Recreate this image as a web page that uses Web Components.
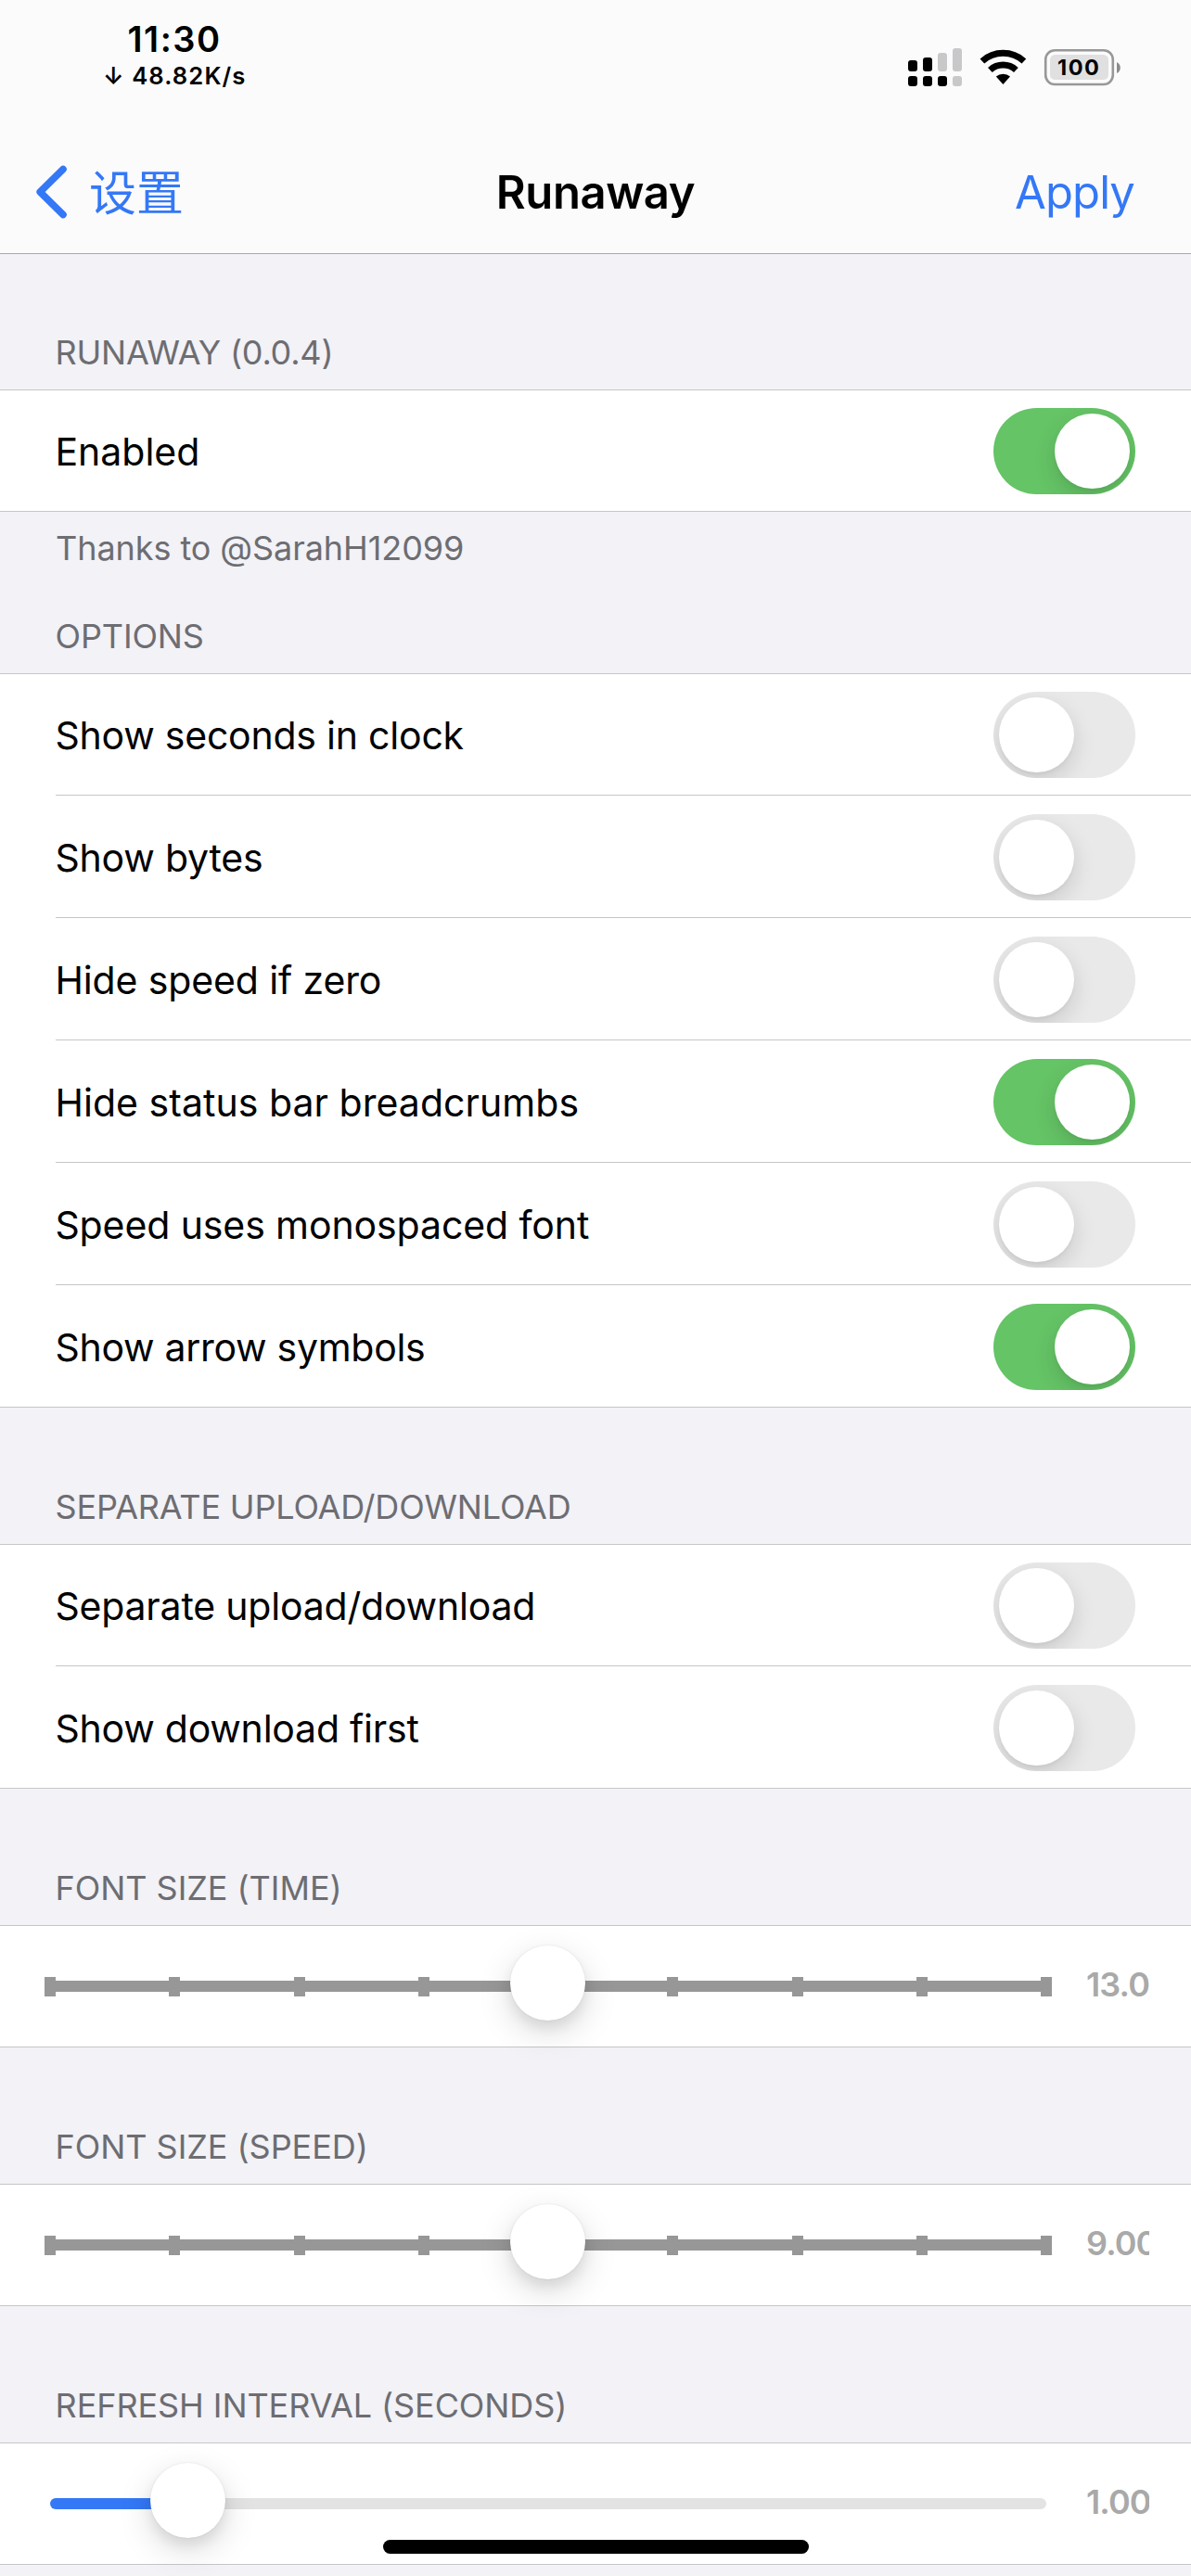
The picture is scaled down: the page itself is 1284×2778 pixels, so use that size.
<!DOCTYPE html>
<html lang="zh-CN">
<head>
<meta charset="utf-8">
<title>Runaway</title>
<style>
html,body{margin:0;padding:0}
body{width:1284px;height:2778px;overflow:hidden;background:#f2f2f7;color:#000;
font-family:Inter,"Noto Sans CJK SC",sans-serif;font-kerning:normal;
--line:#c6c6c8;--blue:#3478f6;--green:#65c466;--muted:#6d6d72}
</style>
</head>
<body>
<status-bar time="11:30" speed="↓ 48.82K/s" battery="100"></status-bar>
<nav-bar><span slot="back">设置</span>Runaway<span slot="action">Apply</span></nav-bar>
<settings-group heading="RUNAWAY (0.0.4)" style="--head:146px;--track:-.22px">
  <toggle-row on last style="--ls:0px">Enabled</toggle-row>
  <span slot="footer">Thanks to @SarahH12099</span>
</settings-group>
<settings-group heading="OPTIONS" style="--head:113px;--track:-.15px">
  <toggle-row style="--ls:-.22px">Show seconds in clock</toggle-row>
  <toggle-row style="--ls:-.2px">Show bytes</toggle-row>
  <toggle-row style="--ls:-.12px">Hide speed if zero</toggle-row>
  <toggle-row on style="--ls:.04px">Hide status bar breadcrumbs</toggle-row>
  <toggle-row style="--ls:-.1px">Speed uses monospaced font</toggle-row>
  <toggle-row on last style="--ls:-.28px">Show arrow symbols</toggle-row>
</settings-group>
<settings-group heading="SEPARATE UPLOAD/DOWNLOAD" style="--track:-.18px">
  <toggle-row style="--ls:-.2px">Separate upload/download</toggle-row>
  <toggle-row last style="--ls:-.22px">Show download first</toggle-row>
</settings-group>
<settings-group heading="FONT SIZE (TIME)">
  <slider-row stepped value="13.00" style="--knob:502.3px"></slider-row>
</settings-group>
<settings-group heading="FONT SIZE (SPEED)">
  <slider-row stepped value="9.00" style="--knob:502.3px"></slider-row>
</settings-group>
<settings-group heading="REFRESH INTERVAL (SECONDS)" style="--track:-.08px">
  <slider-row value="1.00" style="--knob:114px"></slider-row>
</settings-group>
<home-indicator></home-indicator>

<script>
const define = (name, render) => customElements.define(name, class extends HTMLElement {
  connectedCallback() {
    if (this.shadowRoot) return;
    this.attachShadow({ mode: 'open' }).innerHTML = render(this);
  }
});

define('status-bar', el => `
<style>
:host{display:flex;justify-content:space-between;align-items:flex-start;box-sizing:border-box;height:141px;padding:21px 76px 0 111px;background:#fbfbfc}
.left{display:flex;flex-direction:column;gap:4px}
.time{font-size:38px;font-weight:600;line-height:42px;letter-spacing:1.5px;padding-left:26.5px}
.speed{font-size:25.6px;font-weight:600;line-height:30px;letter-spacing:1.1px;white-space:nowrap}
svg{display:block;margin-top:30px}
</style>
<div class="left"><div class="time">${el.getAttribute('time')}</div><div class="speed">${el.getAttribute('speed')}</div></div>
<svg width="229" height="43" viewBox="979 51 229 43">
<g fill="#000"><rect x="979" y="65" width="10" height="12" rx="3"/><rect x="995" y="62" width="10" height="15" rx="3"/>
<rect x="979" y="82" width="10" height="11" rx="3"/><rect x="995" y="82" width="10" height="11" rx="3"/><rect x="1011" y="82" width="10" height="11" rx="3"/></g>
<g fill="#c8c8ca"><rect x="1011" y="57" width="10" height="20" rx="3"/><rect x="1027" y="52" width="10" height="25" rx="3"/><rect x="1027" y="82" width="10" height="11" rx="3"/></g>
<g fill="none" stroke="#000" stroke-width="7"><path d="M1058.9 66A33.6 33.6 0 0 1 1103.9 66"/><path d="M1067.4 75.5A20.9 20.9 0 0 1 1095.4 75.5"/></g>
<path d="M1081.4 91L1073.8 82.6A11.3 11.3 0 0 1 1089 82.6Z"/>
<rect x="1127.2" y="54.2" width="72.6" height="36.8" rx="10" fill="none" stroke="#989899" stroke-width="2.6"/>
<rect x="1132" y="59" width="63" height="27" rx="5.5" fill="#e0e0e1"/>
<path d="M1204 67Q1207.8 69 1207.8 73Q1207.8 77 1204 79Z" fill="#8b8b8c"/>
<text x="1140" y="81.2" font-size="23.5" font-weight="700" letter-spacing="1.5">${el.getAttribute('battery')}</text>
</svg>`);

define('nav-bar', () => `
<style>
:host{display:grid;grid-template-columns:1fr auto 1fr;align-items:center;height:132px;padding:0 61px 0 38px;background:#fbfbfc;border-bottom:1px solid #a9a9ac;font-size:49px;line-height:60px}
.back{display:flex;align-items:center;gap:23px;color:var(--blue);font:400 51px/60px "Noto Sans CJK SC",sans-serif}
.label{padding-bottom:5px}
.title{font-weight:600;letter-spacing:-.4px;padding:1px 0 0 23px}
.action{color:var(--blue);text-align:right;letter-spacing:-.9px;padding-top:1px}
svg{display:block}
</style>
<div class="back"><svg width="35" height="60" viewBox="38 177 35 60" fill="none" stroke="#3478f6" stroke-width="7.6" stroke-linecap="round" stroke-linejoin="round"><path d="M68 182.5L43.2 207L68 231.5"/></svg><div class="label"><slot name="back"></slot></div></div>
<div class="title"><slot></slot></div>
<div class="action"><slot name="action"></slot></div>`);

define('settings-group', el => `
<style>
:host{display:block}
header,footer{font-size:36px;line-height:44px;color:var(--muted);padding:0 59.6px;white-space:nowrap}
header{display:flex;align-items:flex-end;box-sizing:border-box;height:var(--head,147px);padding-bottom:18px;letter-spacing:var(--track,-.05px)}
footer{padding:17px 60px 0;letter-spacing:-.07px}
</style>
<header>${el.getAttribute('heading')}</header>
<slot></slot>
${el.querySelector('[slot=footer]') ? '<footer><slot name="footer"></slot></footer>' : ''}`);

define('ios-switch', () => `
<style>
:host{display:flex;box-sizing:border-box;width:153px;height:93px;padding:6px;border-radius:46.5px;background:#e9e9ea;overflow:hidden}
:host([on]){background:var(--green);justify-content:flex-end}
i{display:block;width:81px;height:81px;border-radius:50%;background:#fff;box-shadow:0 9px 24px rgba(0,0,0,.14),0 3px 3px rgba(0,0,0,.03)}
</style><i></i>`);

define('toggle-row', el => `
<style>
:host{display:block;box-sizing:border-box;height:132px;background:#fff;border-top:1px solid transparent}
:host(:first-child){border-top-color:var(--line)}
:host([last]){border-bottom:1px solid var(--line)}
.row{display:flex;align-items:center;justify-content:space-between;box-sizing:border-box;height:131px;margin-left:60px;padding:1px 60px 0 0;border-bottom:1px solid var(--line)}
:host([last]) .row{height:130px;border:0}
.label{font-size:41px;line-height:50px;letter-spacing:var(--ls,-.05px);padding-top:1px;margin-left:-.6px;white-space:nowrap}
</style>
<div class="row"><div class="label"><slot></slot></div><ios-switch ${el.hasAttribute('on') ? 'on' : ''}></ios-switch></div>`);

define('slider-row', el => {
  const stepped = el.hasAttribute('stepped');
  return `
<style>
:host{display:flex;align-items:center;box-sizing:border-box;height:132px;padding-left:48px;background:#fff;border:solid var(--line);border-width:1px 0}
.slider{position:relative;display:grid;align-items:center;width:1086px;height:130px}
.slider>*{grid-area:1/1}
.track{height:12px;background:#979797}
.plain .track{margin:0 6px;border-radius:6px;background:linear-gradient(to right,var(--blue) calc(var(--knob) + 34px),#e3e3e4 0)}
.ticks{display:flex;justify-content:space-between;padding-top:1px}
.ticks i{width:12px;height:21px;background:#979797}
.knob{position:absolute;left:var(--knob);top:21px;width:81px;height:81px;border-radius:50%;background:#fff;box-shadow:0 0 2px rgba(0,0,0,.1),0 12px 36px rgba(0,0,0,.15),0 8px 14px rgba(0,0,0,.07)}
.value{width:68px;margin-left:37px;padding-bottom:4px;overflow:hidden;font-size:36px;font-weight:600;line-height:44px;letter-spacing:-.9px;color:#a9a9a9;white-space:nowrap}
</style>
<div class="slider ${stepped ? '' : 'plain'}"><div class="track"></div>${stepped ? `<div class="ticks">${'<i></i>'.repeat(9)}</div>` : ''}<div class="knob"></div></div>
<div class="value">${el.getAttribute('value')}</div>`;
});

define('home-indicator', () => `
<style>:host{position:fixed;left:413px;bottom:24px;width:459px;height:15px;border-radius:7.5px;background:#000}</style>`);
</script>
</body>
</html>
